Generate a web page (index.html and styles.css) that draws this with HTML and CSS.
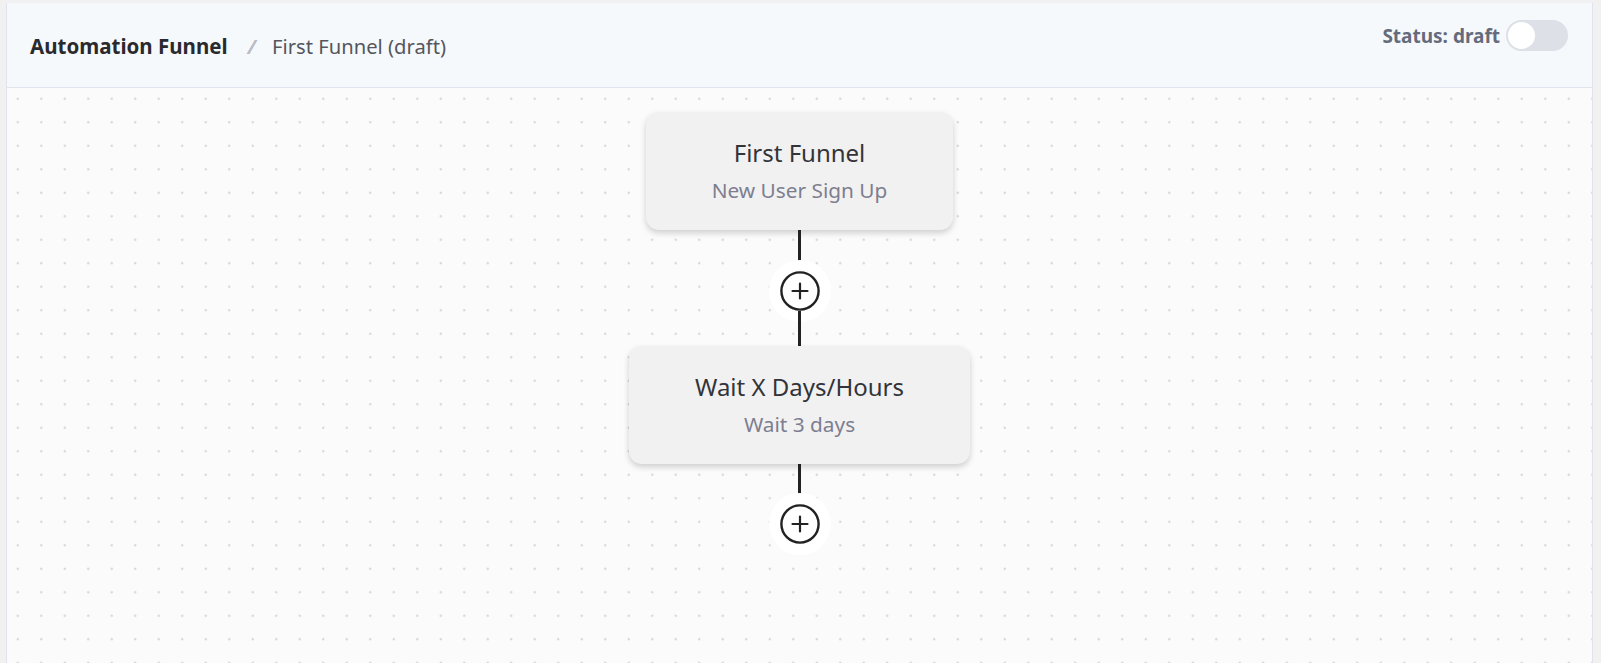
FILE: index.html
```html
<!DOCTYPE html>
<html lang="en">
<head>
  <meta charset="UTF-8">
  <meta name="viewport" content="width=device-width, initial-scale=1.0">
  <title>Automation Funnel</title>
  <link rel="stylesheet" href="styles.css">
</head>
<body>
  <div class="page">
    <div class="panel">
      <div class="header">
        <div class="crumbs">
          <span class="crumb-main">Automation Funnel</span>
          <span class="crumb-sep">/</span>
          <span class="crumb-sub">First Funnel (draft)</span>
        </div>
        <div class="status">
          <span class="status-label">Status: draft</span>
          <span class="toggle"><span class="knob"></span></span>
        </div>
      </div>

      <div class="canvas">
        <div class="node">
          <div class="node-title">First Funnel</div>
          <div class="node-sub">New User Sign Up</div>
        </div>
        <div class="edge"></div>
        <div class="add-btn">
          <svg width="40" height="40" viewBox="0 0 40 40"><circle cx="20" cy="20" r="18.6" fill="#fff" stroke="#222" stroke-width="2.4"/><path d="M20 12.5v15M12.5 20h15" stroke="#222" stroke-width="2.2" stroke-linecap="round"/></svg>
        </div>
        <div class="edge short"></div>
        <div class="node">
          <div class="node-title">Wait X Days/Hours</div>
          <div class="node-sub">Wait 3 days</div>
        </div>
        <div class="edge last"></div>
        <div class="add-btn">
          <svg width="40" height="40" viewBox="0 0 40 40"><circle cx="20" cy="20" r="18.6" fill="#fff" stroke="#222" stroke-width="2.4"/><path d="M20 12.5v15M12.5 20h15" stroke="#222" stroke-width="2.2" stroke-linecap="round"/></svg>
        </div>
      </div>
    </div>
  </div>
</body>
</html>
```

FILE: styles.css
```css
body { margin: 0; background: #f1f1f1; font-family: "Noto Sans", "Open Sans", sans-serif; overflow: hidden; }
.page { padding: 3px 8px 0 6px; height: 660px; }
.panel { height: 100%; border-left: 1px solid #e2e2ec; border-right: 1px solid #e2e2ec; display: flex; flex-direction: column; }

.header { height: 84px; background: #f5f9fc; border-bottom: 1px solid #e2e5ee; display: flex; justify-content: space-between; align-items: flex-start; padding: 0 24px 0 23px; flex-shrink: 0; }
.crumbs { margin-top: 29px; display: flex; align-items: baseline; }
.crumb-main { font-weight: 700; font-size: 20.5px; color: #2a2a2e; }
.crumb-sep { color: #b9bcc4; font-size: 20px; font-weight: 700; margin: 0 16px 0 20px; font-style: italic; }
.crumb-sub { font-size: 20.2px; color: #55565c; }

.status { display: flex; align-items: center; margin-top: 17px; gap: 6px; }
.status-label { font-weight: 700; font-size: 19px; color: #646b7c; }
.toggle { width: 62px; height: 31px; border-radius: 16px; background: #dde0e6; position: relative; }
.knob { position: absolute; left: 2px; top: 2px; width: 27px; height: 27px; border-radius: 50%; background: #fff; }

.canvas { flex: 1; background-color: #fbfbfb; background-image: radial-gradient(circle, #d6d6d6 1.1px, transparent 1.6px); background-size: 23.5px 23.5px; background-position: -1px -1px; display: flex; flex-direction: column; align-items: center; padding-top: 24px; }

.node { background: #f1f1f1; border-radius: 13px; box-shadow: 0 3px 6px rgba(0,0,0,0.18); padding: 0 66px 1px; height: 118px; box-sizing: border-box; display: flex; flex-direction: column; align-items: center; justify-content: center; }
.node-title { font-size: 24px; color: #33343a; line-height: 32px; }
.node-sub { font-size: 20.8px; color: #7d7e90; line-height: 28px; margin-top: 7px; }

.edge { width: 2.5px; height: 41px; background: #222; }
.edge.short { height: 35px; }
.edge.last { height: 40px; }
.add-btn { width: 40px; height: 40px; border-radius: 50%; box-shadow: 0 0 0 11px #fff; }
.add-btn svg { display: block; }
```
